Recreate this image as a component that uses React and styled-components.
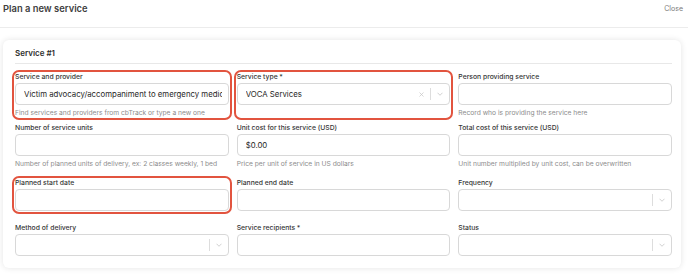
import React from 'react';
import styled, { createGlobalStyle, css } from 'styled-components';

const GlobalStyle = createGlobalStyle`
  * { box-sizing: border-box; }
  body {
    margin: 0;
    background: #ffffff;
    font-family: Inter, "Noto Sans", sans-serif;
    color: #333333;
  }
`;

const Page = styled.div`
  width: 688px;
  height: 275px;
  overflow: hidden;
`;

const Header = styled.header`
  display: flex;
  align-items: flex-start;
  justify-content: space-between;
  height: 28px;
  padding: 3px 5px 0 3px;
  border-bottom: 1px solid #ececec;
`;

const Title = styled.h1`
  margin: 0;
  font-size: 9.4px;
  line-height: 11px;
  font-weight: 600;
  color: #404040;
`;

const Close = styled.button`
  border: 0;
  background: none;
  padding: 0;
  margin-top: 1px;
  font: inherit;
  font-size: 7px;
  line-height: 10px;
  color: #7a7a7a;
`;

const Card = styled.section`
  margin: 12px 7px 0 3px;
  padding: 0 9px 12px 12px;
  background: #fff;
  border-radius: 6px;
  box-shadow: 0 0 6px rgba(0, 0, 0, 0.11);
`;

const CardTitle = styled.h2`
  margin: 0;
  padding: 8px 0 5px;
  font-size: 8px;
  line-height: 10px;
  font-weight: 600;
  color: #2e2e2e;
  border-bottom: 1px solid #e8e8e8;
`;

const Grid = styled.div`
  display: grid;
  grid-template-columns: repeat(3, minmax(0, 1fr));
  grid-template-rows: 51px 55px 45px auto;
  column-gap: 8px;
  margin-top: 9px;
  align-items: start;
`;

const Field = styled.div`
  display: flex;
  flex-direction: column;
  min-width: 0;
  border-radius: 4px;
  ${({ $highlight }) =>
    $highlight &&
    css`
      outline: 2px solid #e2543f;
      outline-offset: 1px;
    `}
`;

const Label = styled.label`
  font-size: 6.8px;
  line-height: 8px;
  font-weight: 500;
  color: #363636;
  margin-bottom: 2px;
  white-space: nowrap;
`;

const Required = styled.span`
  margin-left: 1.5px;
`;

const Box = styled.div`
  display: flex;
  align-items: center;
  height: 22px;
  padding: 0 ${({ $select }) => ($select ? '0' : '6px')} 0 8px;
  border: 1px solid #d8d8d8;
  border-radius: 4px;
  background: #fff;
  font-size: 7.8px;
  color: #262626;
  overflow: hidden;
`;

const Value = styled.span`
  flex: 1;
  min-width: 0;
  white-space: nowrap;
  overflow: hidden;
  text-overflow: clip;
`;

const Indicators = styled.div`
  display: flex;
  align-items: center;
  height: 100%;
  padding-right: 6px;
`;

const Clear = styled.span`
  display: flex;
  margin-right: 6px;
  color: #c4c4c4;
`;

const Divider = styled.span`
  width: 1px;
  height: 12px;
  background: #dddddd;
  margin-right: 6px;
`;

const Chevron = styled.span`
  display: flex;
  color: #bdbdbd;
`;

const Help = styled.div`
  margin-top: 4px;
  font-size: 6.7px;
  line-height: 8px;
  min-height: 8px;
  color: #8c8c8c;
  white-space: nowrap;
`;

function SelectControls({ clearable }) {
  return (
    <Indicators>
      {clearable && (
        <Clear>
          <svg width="5" height="5" viewBox="0 0 10 10">
            <path d="M1 1L9 9M9 1L1 9" stroke="currentColor" strokeWidth="1.4" />
          </svg>
        </Clear>
      )}
      <Divider />
      <Chevron>
        <svg width="6" height="4" viewBox="0 0 12 8">
          <path d="M1 1.5L6 6.5L11 1.5" fill="none" stroke="currentColor" strokeWidth="1.4" />
        </svg>
      </Chevron>
    </Indicators>
  );
}

function FormField({ label, required, value, help, select, clearable, highlight, reserveHelp }) {
  return (
    <Field $highlight={highlight}>
      <Label>
        {label}
        {required && <Required>*</Required>}
      </Label>
      <Box $select={select}>
        <Value>{value}</Value>
        {select && <SelectControls clearable={clearable} />}
      </Box>
      {(help || reserveHelp) && <Help>{help}</Help>}
    </Field>
  );
}

export default function App() {
  return (
    <Page>
      <GlobalStyle />
      <Header>
        <Title>Plan a new service</Title>
        <Close>Close</Close>
      </Header>
      <Card>
        <CardTitle>Service #1</CardTitle>
        <Grid>
          <FormField
            highlight
            label="Service and provider"
            value="Victim advocacy/accompaniment to emergency medical care"
            help="Find services and providers from cbTrack or type a new one"
          />
          <FormField
            highlight
            reserveHelp
            label="Service type"
            required
            value="VOCA Services"
            select
            clearable
          />
          <FormField
            label="Person providing service"
            help="Record who is providing the service here"
          />
          <FormField
            label="Number of service units"
            help="Number of planned units of delivery, ex: 2 classes weekly, 1 bed"
          />
          <FormField
            label="Unit cost for this service (USD)"
            value="$0.00"
            help="Price per unit of service in US dollars"
          />
          <FormField
            label="Total cost of this service (USD)"
            help="Unit number multiplied by unit cost, can be overwritten"
          />
          <FormField highlight label="Planned start date" />
          <FormField label="Planned end date" />
          <FormField label="Frequency" select />
          <FormField label="Method of delivery" select />
          <FormField label="Service recipients" required />
          <FormField label="Status" select />
        </Grid>
      </Card>
    </Page>
  );
}
